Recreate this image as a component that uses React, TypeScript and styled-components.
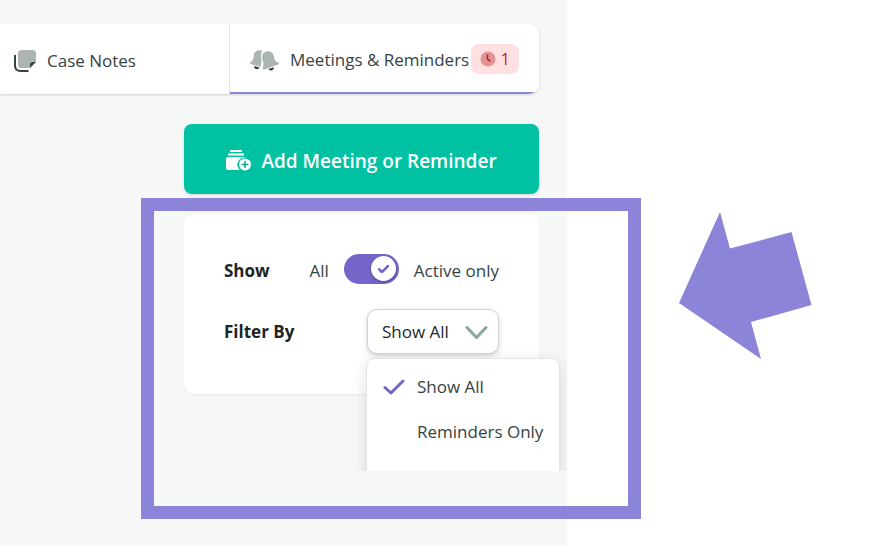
import React, { useState } from "react";
import styled, { createGlobalStyle } from "styled-components";

const purple = "#8c84d8";
const violet = "#7764c8";
const ink = "#35433f";
const surface = "#f6f8f8";

const GlobalStyle = createGlobalStyle`
  *, *::before, *::after { box-sizing: border-box; }
  body {
    margin: 0;
    background: #ffffff;
    color: ${ink};
    font-family: "Open Sans", "Noto Sans", sans-serif;
    font-size: 17px;
    line-height: 24px;
  }
  button, select { font: inherit; color: inherit; }
  svg { flex: none; }
`;

const Page = styled.main`
  position: relative;
  display: grid;
  grid-template-columns: 9fr 5fr;
  min-height: 100vh;
  overflow: hidden;
`;

const AppPane = styled.section`
  background: ${surface};
`;

const Capture = styled.div`
  display: flex;
  flex-direction: column;
  gap: 30px;
  height: 471px;
  padding: 24px 28px 0 0;
  overflow: hidden;
`;

const Tabs = styled.nav`
  display: grid;
  grid-template-columns: minmax(0, 1fr) 309px;
  flex: none;
  height: 70px;
  overflow: hidden;
  background: #ffffff;
  border-radius: 0 10px 10px 0;
`;

const TabsShadow = styled.div`
  border-radius: 0 10px 10px 0;
  box-shadow: 0 1px 3px rgba(0, 0, 0, 0.16);
`;

const Tab = styled.button<{ $active?: boolean }>`
  display: flex;
  align-items: center;
  padding: ${(p) => (p.$active ? "4px 20px 0" : "3px 14px 0")};
  border: 0;
  border-right: ${(p) => (p.$active ? "0" : "1px solid #dfe3e3")};
  border-bottom: ${(p) => (p.$active ? `2px solid ${purple}` : "0")};
  background: transparent;
  white-space: nowrap;
  cursor: pointer;
`;

const TabLabel = styled.span`
  margin-left: 11px;
`;

const Badge = styled.span`
  display: flex;
  align-items: center;
  gap: 5px;
  height: 30px;
  margin: -2px 0 0 auto;
  padding: 0 9px;
  border-radius: 8px;
  background: #ffe0e0;
  color: #c01818;
  font-size: 16px;
`;

const Side = styled.div`
  display: flex;
  flex-direction: column;
  align-self: flex-end;
  gap: 20px;
  width: 355px;
`;

const AddButton = styled.button`
  display: flex;
  align-items: center;
  justify-content: center;
  gap: 10px;
  height: 70px;
  padding: 3px 0 0;
  border: 0;
  border-radius: 8px;
  background: #00c2a2;
  box-shadow: 0 1px 3px rgba(0, 0, 0, 0.14);
  color: #ffffff;
  font-size: 19px;
  font-weight: 600;
  white-space: nowrap;
  cursor: pointer;
`;

const Card = styled.div`
  display: flex;
  flex-direction: column;
  gap: 25px;
  padding: 40px;
  border-radius: 10px;
  background: #ffffff;
  box-shadow: 0 1px 2px rgba(0, 0, 0, 0.06);
`;

const Row = styled.div`
  display: flex;
  align-items: center;
  justify-content: space-between;
`;

const RowTitle = styled.label`
  color: #202524;
  font-weight: 700;
`;

const SwitchRow = styled(Row)`
  height: 30px;
  & > ${RowTitle} { padding-top: 3px; }
`;

const SwitchGroup = styled.div`
  display: flex;
  align-items: center;
  gap: 15px;
`;

const SwitchText = styled.span`
  padding-top: 3px;
`;

const Switch = styled.span`
  position: relative;
  display: flex;
  width: 55px;
  height: 30px;
`;

const SwitchInput = styled.input`
  appearance: none;
  width: 100%;
  height: 100%;
  margin: 0;
  border-radius: 15px;
  background: #b4bcba;
  cursor: pointer;
  &:checked { background: ${violet}; }
`;

const Knob = styled.span<{ $on: boolean }>`
  position: absolute;
  top: 2px;
  left: ${(p) => (p.$on ? 27 : 3)}px;
  display: grid;
  place-items: center;
  width: 25px;
  height: 25px;
  border-radius: 50%;
  background: #ffffff;
  box-shadow: 0 1px 3px rgba(0, 0, 0, 0.3);
  pointer-events: none;
`;

const Picker = styled.div`
  position: relative;
  width: 132px;
  height: 45px;
`;

const PickerSelect = styled.select`
  appearance: none;
  width: 100%;
  height: 100%;
  padding: 1px 40px 0 14px;
  border: 1px solid #cfd5d4;
  border-radius: 10px;
  background: #ffffff;
  box-shadow: 0 2px 5px rgba(0, 0, 0, 0.18);
  color: #222827;
  cursor: pointer;
`;

const PickerArrow = styled.svg`
  position: absolute;
  top: 16px;
  right: 11px;
  pointer-events: none;
`;

const Menu = styled.ul`
  position: absolute;
  top: 49px;
  left: -1px;
  width: 194px;
  margin: 0;
  padding: 5px 0;
  list-style: none;
  border: 1px solid #e4e6e6;
  border-radius: 8px;
  background: #ffffff;
  box-shadow: 0 4px 16px rgba(0, 0, 0, 0.12);
`;

const MenuItem = styled.button`
  display: grid;
  grid-template-columns: 22px auto;
  align-items: center;
  justify-content: start;
  gap: 12px;
  width: 100%;
  height: 45px;
  padding: 0 16px;
  border: 0;
  background: transparent;
  text-align: left;
  white-space: nowrap;
  cursor: pointer;
`;

const MenuLabel = styled.span`
  grid-column: 2;
`;

const Notes = styled.aside`
  padding: 212px 0 0 112px;
`;

const Highlight = styled.div`
  position: absolute;
  top: 198px;
  left: 141px;
  width: 500px;
  height: 321px;
  border: 13px solid ${purple};
  pointer-events: none;
`;

const NotesIcon = () => (
  <svg width="22" height="22" viewBox="0 0 22 22" aria-hidden="true">
    <path d="M1 5v10.500q0 5.500 5.500 5.500h8" fill="none" stroke="#32443f" strokeWidth="2" />
    <path d="M7.500 0h11Q22 0 22 3.500V12h-3q-3 0-3 3v3H7.500Q4 18 4 14.500v-11Q4 0 7.500 0z" fill="#adb5b3" />
    <path d="M16 18v-3.500q0-2.500 2.500-2.500H22z" fill="#32443f" />
  </svg>
);

const BellsIcon = () => (
  <svg width="29" height="21" viewBox="0 0 29 21" aria-hidden="true">
    <path
      d="M12.500 1.200C10.500-.3 7-.2 5 2.300 2.800 5 4.300 8 2.600 10.200L.2 12.400q-.6 1.200.5 1.700L10.800 17c-.5-2.600 1.200-4.300.6-7.500-.6-3.300-1.100-6 1.100-8.300z"
      fill="#adb5b3"
    />
    <path
      d="M14.300 2.200c3-1.900 7-1.200 8.700 1.700 1.600 2.800.8 5.800 3.300 7.700l2.300 1.200q.8 1-.2 1.800l-14.200 4.800q-1.300.2-1.600-1l.6-2.600c1.200-2.900-.9-5.400-1-8.400-.1-2.200.6-4.200 2.100-5.200z"
      fill="#adb5b3"
    />
    <path d="M4 16l5.500 1.600q-.8 2-2.800 1.700Q4 18.900 4 16z" fill="#32443f" />
    <path d="M18.300 19.100l5.600-1.900q.2 2.500-2 3.200-2.300.7-3.600-1.300z" fill="#32443f" />
  </svg>
);

const ClockIcon = () => (
  <svg width="16" height="16" viewBox="0 0 16 16" aria-hidden="true">
    <circle cx="8" cy="8" r="7.500" fill="#e39393" />
    <path d="M7.500 3.500V8l3 2.500" fill="none" stroke="#c01818" strokeWidth="1.500" />
  </svg>
);

const AddIcon = () => (
  <svg width="25" height="21" viewBox="0 0 25 21" aria-hidden="true">
    <path d="M4 1h12M2 4.500h16" stroke="#fff" strokeWidth="1.800" />
    <path d="M2 7h16q1 0 1.300.8A7 7 0 0 0 13.800 20H2q-2 0-2-2V9q0-2 2-2z" fill="#fff" />
    <circle cx="19" cy="14.500" r="6" fill="#fff" />
    <path d="M19 11v7M15.500 14.500h7" stroke="#00a98d" strokeWidth="1.500" />
  </svg>
);

const TickIcon = ({ width, strokeWidth }: { width: number; strokeWidth: number }) => (
  <svg width={width} height={Math.round(width * 0.73)} viewBox="0 0 22 16" aria-hidden="true">
    <path
      d="M2 8.500L8 14 20 2"
      fill="none"
      stroke={violet}
      strokeWidth={strokeWidth}
      strokeLinecap="round"
      strokeLinejoin="round"
    />
  </svg>
);

const filters = ["Show All", "Reminders Only", "Meetings Only"];

export default function App() {
  const [activeOnly, setActiveOnly] = useState(true);
  const [filter, setFilter] = useState(filters[0]);

  return (
    <>
      <GlobalStyle />
      <Page>
        <AppPane>
          <Capture>
            <TabsShadow>
              <Tabs>
                <Tab type="button">
                  <NotesIcon />
                  <TabLabel>Case Notes</TabLabel>
                </Tab>
                <Tab type="button" $active aria-current="page">
                  <BellsIcon />
                  <TabLabel>Meetings &amp; Reminders</TabLabel>
                  <Badge>
                    <ClockIcon />1
                  </Badge>
                </Tab>
              </Tabs>
            </TabsShadow>
            <Side>
              <AddButton type="button">
                <AddIcon />
                Add Meeting or Reminder
              </AddButton>
              <Card>
                <SwitchRow>
                  <RowTitle htmlFor="active-only">Show</RowTitle>
                  <SwitchGroup>
                    <SwitchText>All</SwitchText>
                    <Switch>
                      <SwitchInput
                        id="active-only"
                        type="checkbox"
                        role="switch"
                        checked={activeOnly}
                        onChange={(e) => setActiveOnly(e.target.checked)}
                      />
                      <Knob $on={activeOnly}>
                        {activeOnly && <TickIcon width={11} strokeWidth={5} />}
                      </Knob>
                    </Switch>
                    <SwitchText>Active only</SwitchText>
                  </SwitchGroup>
                </SwitchRow>
                <Row>
                  <RowTitle htmlFor="filter">Filter By</RowTitle>
                  <Picker>
                    <PickerSelect id="filter" value={filter} onChange={(e) => setFilter(e.target.value)}>
                      {filters.map((name) => (
                        <option key={name}>{name}</option>
                      ))}
                    </PickerSelect>
                    <PickerArrow width="23" height="15" viewBox="0 0 23 15" aria-hidden="true">
                      <path
                        d="M2 2.500l9.500 10 9.500-10"
                        fill="none"
                        stroke="#86a99d"
                        strokeWidth="3"
                        strokeLinecap="round"
                        strokeLinejoin="round"
                      />
                    </PickerArrow>
                    <Menu>
                      {filters.map((name) => (
                        <li key={name}>
                          <MenuItem type="button" onClick={() => setFilter(name)}>
                            {name === filter && <TickIcon width={22} strokeWidth={3} />}
                            <MenuLabel>{name}</MenuLabel>
                          </MenuItem>
                        </li>
                      ))}
                    </Menu>
                  </Picker>
                </Row>
              </Card>
            </Side>
          </Capture>
        </AppPane>
        <Notes>
          <svg width="133" height="147" viewBox="0 0 133 147" aria-hidden="true">
            <path d="M41 0L51 36.500 112.500 20 132.500 93 72 110 82 147 0 91z" fill={purple} />
          </svg>
        </Notes>
        <Highlight />
      </Page>
    </>
  );
}
